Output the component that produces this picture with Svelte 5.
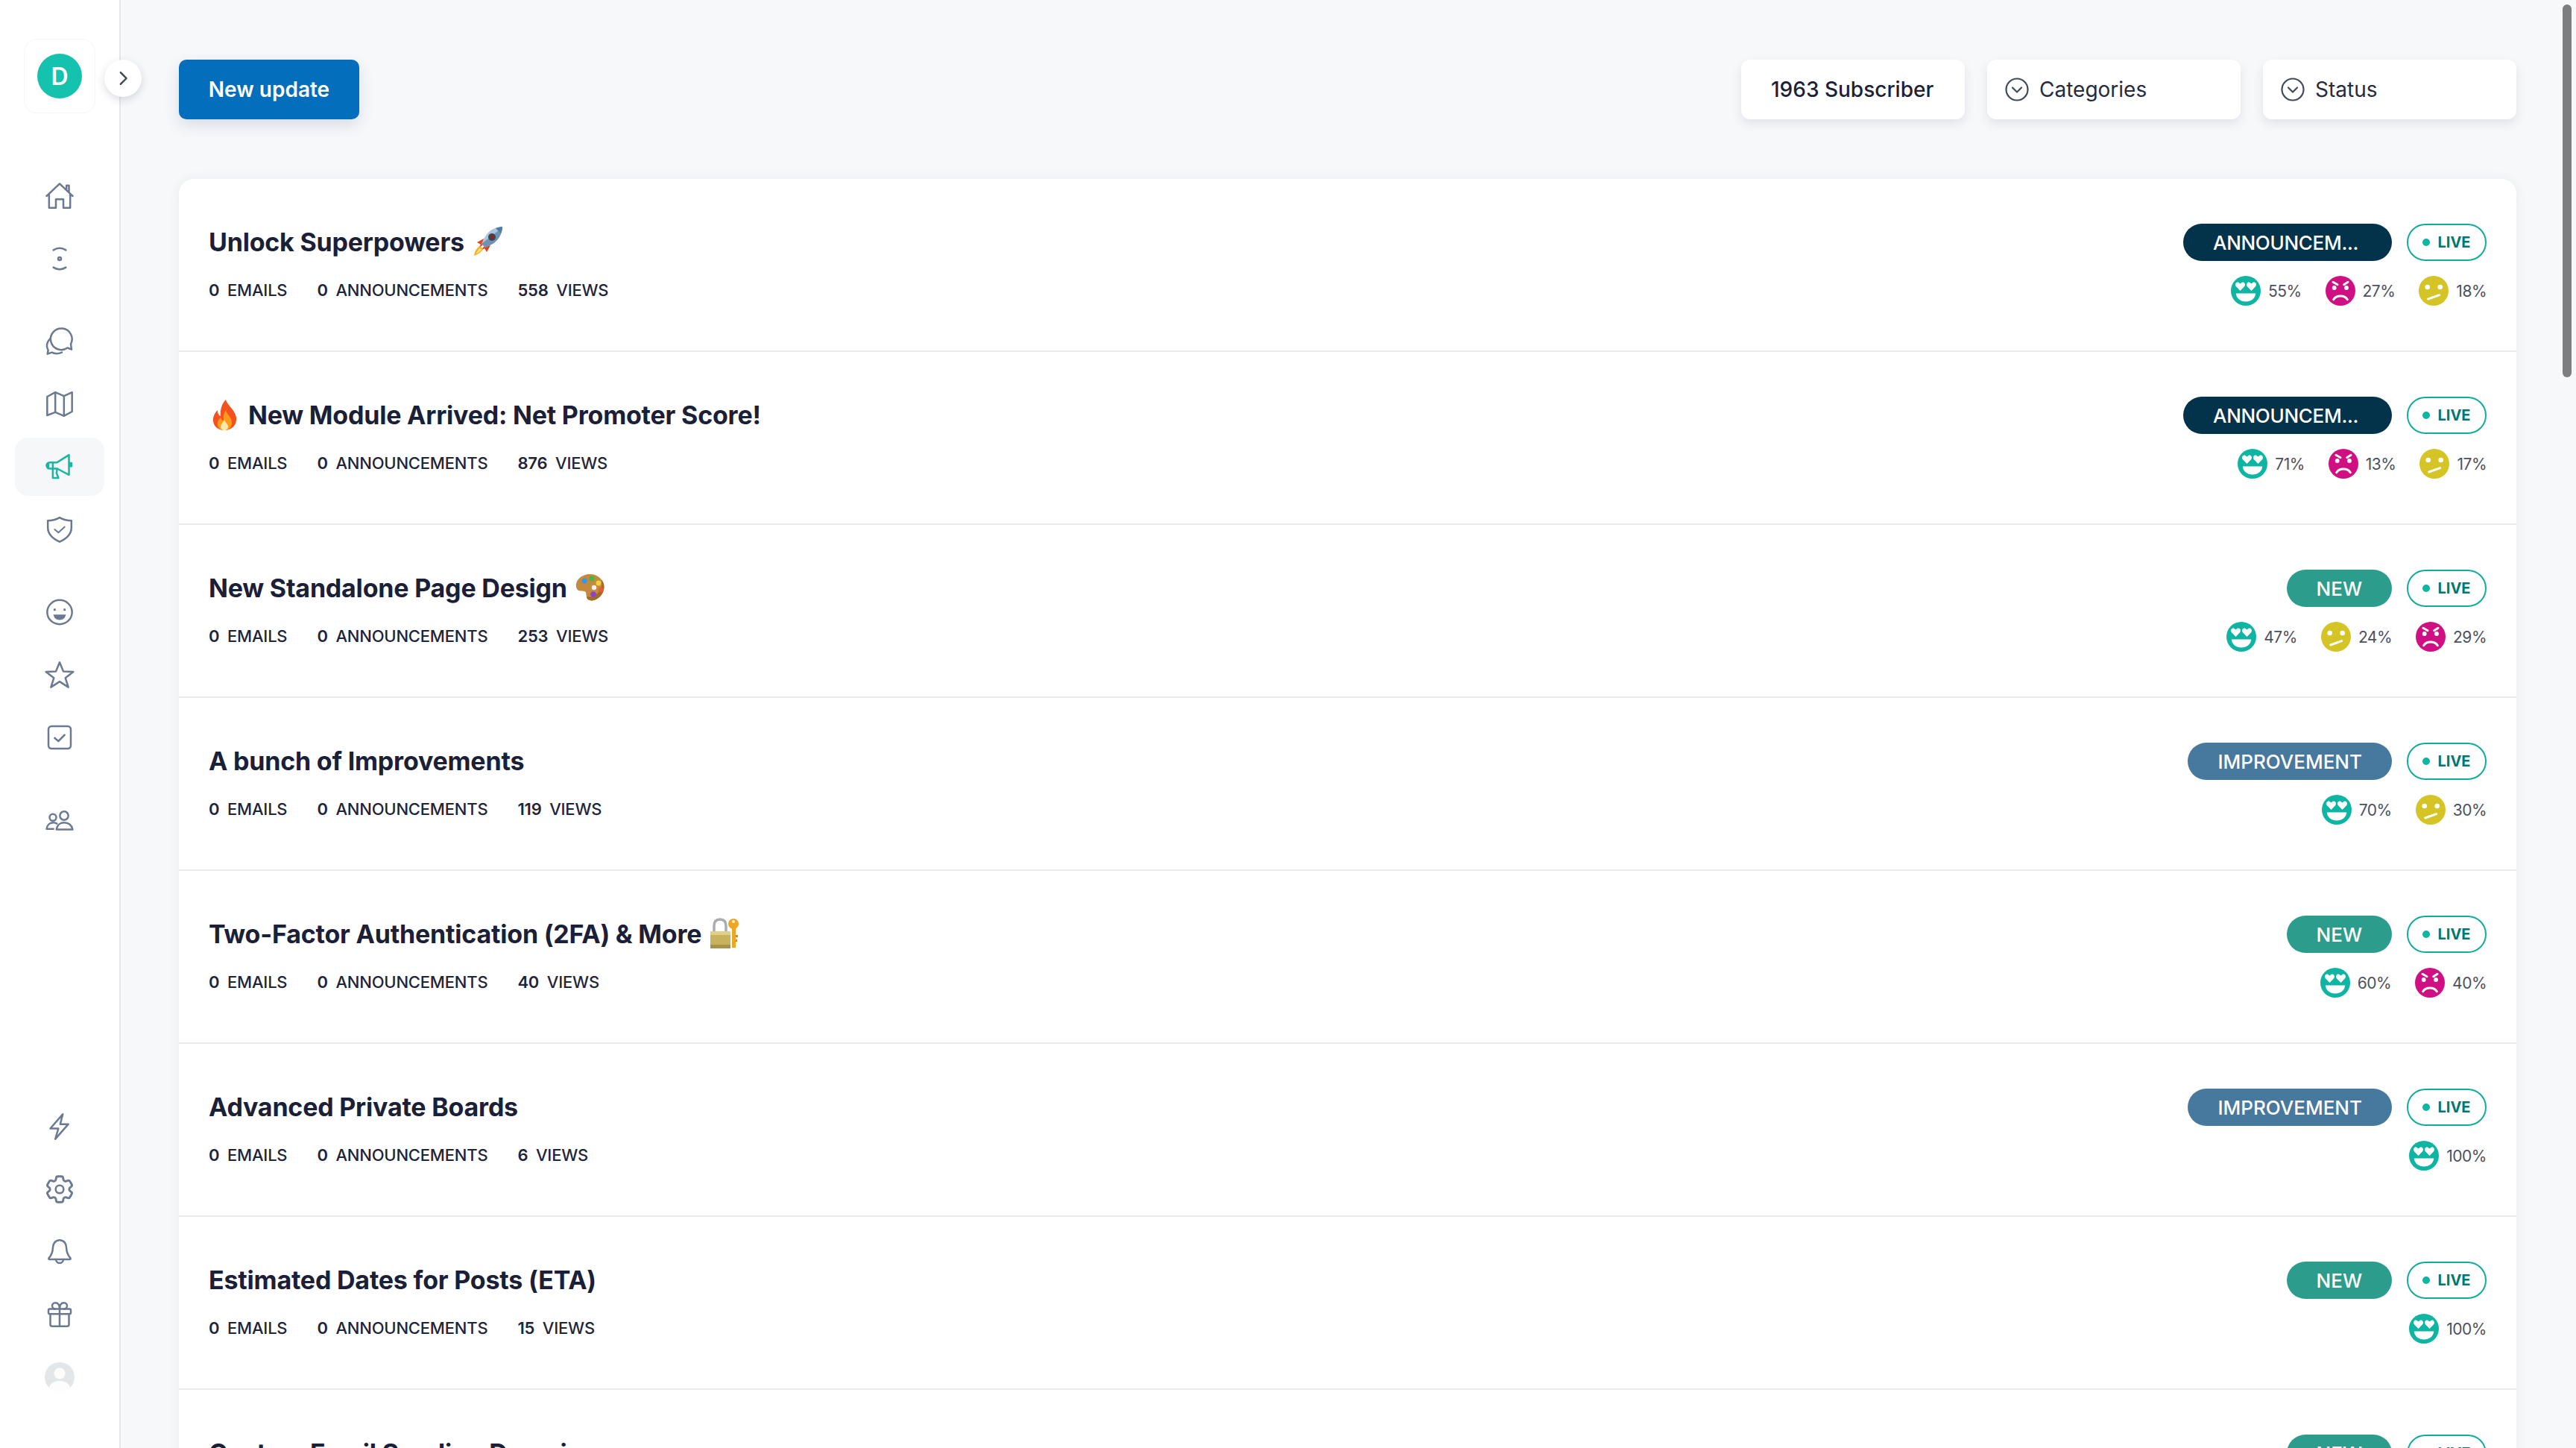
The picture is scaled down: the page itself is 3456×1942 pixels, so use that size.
<script>
	const rows = [
		{ title: 'Unlock Superpowers', emoji: 'rocket', views: 558, tag: 'ANNOUNCEM...', kind: 'announce', faces: [['love', 55], ['angry', 27], ['meh', 18]] },
		{ title: 'New Module Arrived: Net Promoter Score!', lead: 'fire', views: 876, tag: 'ANNOUNCEM...', kind: 'announce', faces: [['love', 71], ['angry', 13], ['meh', 17]] },
		{ title: 'New Standalone Page Design', emoji: 'palette', views: 253, tag: 'NEW', kind: 'new', faces: [['love', 47], ['meh', 24], ['angry', 29]] },
		{ title: 'A bunch of Improvements', views: 119, tag: 'IMPROVEMENT', kind: 'improve', faces: [['love', 70], ['meh', 30]] },
		{ title: 'Two-Factor Authentication (2FA) & More', emoji: 'lock', views: 40, tag: 'NEW', kind: 'new', faces: [['love', 60], ['angry', 40]] },
		{ title: 'Advanced Private Boards', views: 6, tag: 'IMPROVEMENT', kind: 'improve', faces: [['love', 100]] },
		{ title: 'Estimated Dates for Posts (ETA)', views: 15, tag: 'NEW', kind: 'new', faces: [['love', 100]] },
		{ title: 'Custom Email Sending Domain', views: 22, tag: 'NEW', kind: 'new', faces: [['love', 100]] }
	];

	// sidebar groups, icons are drawn in the snippet below
	const topGroups = [['home', 'eye'], ['chat', 'map', 'megaphone', 'shield'], ['smile', 'star', 'check'], ['users']];
	const bottomNav = ['bolt', 'gear', 'bell', 'gift'];
</script>

{#snippet navIcon(name)}
	<svg class="nav-icon" viewBox="0 0 24 24" fill="none" stroke="currentColor" stroke-width="1.5" stroke-linecap="round" stroke-linejoin="round">
		{#if name === 'home'}
			<path d="M1.500 12 12 2 22.500 12M17.500 7.200V3.500h2v5.600M3.500 10.500V21.500H9V14.500H15V21.500H20.500V10.500" />
		{:else if name === 'eye'}
			<path d="M7 5Q12 1.800 17 5M7 19Q12 22.200 17 19" />
			<circle cx="12" cy="12" r="1.200" />
		{:else if name === 'chat'}
			<path d="M21.600 18.400 18.300 17.100A8.600 8.600 0 1 1 21 14Z" />
			<path d="M4.600 9.500C2.500 11.500 1.600 14 1.800 16 1.900 17.300 2.300 18 2.800 19L2.200 22 5.800 20.800C7.500 21.800 10.500 22.200 13.800 20.800" />
		{:else if name === 'map'}
			<path d="M2 6 8.500 2.500 15.500 5.500 22 2.500V18L15.500 21.500 8.500 18.500 2 21Z" />
			<path d="M8.500 2.500V18.500M15.500 5.500V21.500" />
		{:else if name === 'megaphone'}
			<path d="M4 8.500H10L19.500 2.500V18.500L10 13.500H4A2.500 2.500 0 0 1 4 8.500Z" />
			<path d="M6.500 8.500V13.500M6.500 13.500V21H11L9.500 17 10 13.500" />
			<path d="M20 9H21.500V11.500H20Z" fill="currentColor" />
			<path d="M3 9.200A2 2 0 0 0 3 12.800Z" fill="currentColor" />
		{:else if name === 'shield'}
			<path d="M12 2.500C15 4.200 18 5 21.500 5V10.500C21.500 15.500 17.500 19.500 12 22 6.500 19.500 2.500 15.500 2.500 10.500V5C6 5 9 4.200 12 2.500Z" />
			<path d="M8 12 11 14.500 16 10" stroke-width="1.200" />
		{:else if name === 'smile'}
			<ellipse cx="12" cy="12" rx="10" ry="9.700" />
			<circle cx="8" cy="10" r="1" fill="currentColor" stroke="none" />
			<circle cx="16" cy="10" r="1" fill="currentColor" stroke="none" />
			<path d="M7 14H17C16.500 17 14.500 18.300 12 18.300S7.500 17 7 14Z" fill="currentColor" stroke="none" />
		{:else if name === 'star'}
			<path d="M12 2 15 9.300 23 9.600 16.600 14.500 19 22 12 17.500 5 22 7.400 14.500 1 9.600 9 9.300Z" />
		{:else if name === 'check'}
			<rect x="3" y="3" width="18" height="18" rx="2.500" />
			<path d="M8 12.500 11 15 16 10" />
		{:else if name === 'users'}
			<circle cx="15.600" cy="8.400" r="3.400" />
			<circle cx="6.600" cy="9.800" r="2.700" />
			<path d="M9.500 19.500C10 15.500 13 14 15.500 14 18.500 14 21.500 15.500 22.500 19.500Z" />
			<path d="M7 19H1.500C2 15.500 4.500 14 7 14 8 14 9 14.300 9.800 14.800" />
		{:else if name === 'bolt'}
			<path d="M14.500 2 4.500 13.500H11L8.500 22 19 10H12.500Z" />
		{:else if name === 'gear'}
			<path d="M9.594 3.940c.09-.542.56-.94 1.110-.94h2.593c.55 0 1.020.398 1.110.94l.213 1.281c.063.374.313.686.645.87.074.04.147.083.22.127.324.196.72.257 1.075.124l1.217-.456a1.125 1.125 0 011.370.49l1.296 2.247a1.125 1.125 0 01-.26 1.431l-1.003.827c-.293.24-.438.613-.431.992a6.759 6.759 0 010 .255c-.007.378.138.75.43.99l1.005.828c.424.35.534.954.26 1.430l-1.298 2.247a1.125 1.125 0 01-1.369.491l-1.217-.456c-.355-.133-.75-.072-1.076.124a6.570 6.570 0 01-.22.128c-.331.183-.581.495-.644.869l-.213 1.280c-.09.543-.56.941-1.110.941h-2.594c-.55 0-1.020-.398-1.110-.94l-.213-1.281c-.062-.374-.312-.686-.644-.87a6.520 6.520 0 01-.22-.127c-.325-.196-.72-.257-1.076-.124l-1.217.456a1.125 1.125 0 01-1.369-.49l-1.297-2.247a1.125 1.125 0 01.26-1.431l1.004-.827c.292-.24.437-.613.43-.992a6.932 6.932 0 010-.255c.007-.378-.138-.75-.43-.99l-1.004-.828a1.125 1.125 0 01-.26-1.430l1.297-2.247a1.125 1.125 0 011.370-.491l1.216.456c.356.133.751.072 1.076-.124.072-.044.146-.087.22-.128.332-.183.582-.495.644-.869l.214-1.281z" transform="translate(-1.800 -1.800) scale(1.150)" />
			<circle cx="12" cy="12" r="3.200" />
		{:else if name === 'bell'}
			<path d="M12 2.500C8.500 2.500 6.500 5.500 6.500 9 6.500 13 5 15 3.300 17 3 17.500 3.300 18 4 18H20C20.700 18 21 17.500 20.700 17 19 15 17.500 13 17.500 9 17.500 5.500 15.500 2.500 12 2.500Z" />
			<path d="M9 18A3 3 0 0 0 15 18" />
		{:else if name === 'gift'}
			<rect x="3" y="7.500" width="18" height="4" rx="1" />
			<path d="M4.500 11.500V20A1.500 1.500 0 0 0 6 21.500H18A1.500 1.500 0 0 0 19.500 20V11.500M12 7.500V21.500" />
			<path d="M12 7.500C12 4 10.500 2.500 8.500 2.500A2.500 2.500 0 0 0 8.500 7.500M12 7.500C12 4 13.500 2.500 15.500 2.500A2.500 2.500 0 0 1 15.500 7.500" />
		{/if}
	</svg>
{/snippet}

{#snippet face(kind)}
	<svg class="face" viewBox="0 0 40 40">
		{#if kind === 'love'}
			<circle cx="20" cy="20" r="20" fill="#0fb5a3" />
			<path d="M12.500 20 6.700 14C4.500 10.500 8 7.500 10.500 9L12.500 10.500 14.500 9C17 7.500 20.500 10.500 18.300 14Z M27.500 20 21.700 14C19.500 10.500 23 7.500 25.500 9L27.500 10.500 29.500 9C32 7.500 35.500 10.500 33.300 14Z" fill="#fff" />
			<path d="M6.800 23.500H33.200C33 30 27 34.500 20 34.500S7 30 6.800 23.500Z" fill="#fff" />
		{:else if kind === 'angry'}
			<circle cx="20" cy="20" r="20" fill="#cf0f82" />
			<circle cx="11.700" cy="16" r="2.900" fill="#fff" />
			<circle cx="28" cy="16" r="2.900" fill="#fff" />
			<path d="M10 8.300 16 11.700M30 8.300 24.700 11.700M10.700 31.700C14.500 25.500 25.500 25.500 29.300 31.700" fill="none" stroke="#fff" stroke-width="3" stroke-linecap="round" />
		{:else}
			<circle cx="20" cy="20" r="20" fill="#d4c426" />
			<circle cx="11.700" cy="15" r="3.300" fill="#fff" />
			<circle cx="28.700" cy="15" r="3.300" fill="#fff" />
			<path d="M12.700 31 27.700 25.700" fill="none" stroke="#fff" stroke-width="3" stroke-linecap="round" />
		{/if}
	</svg>
{/snippet}

{#snippet emojiPic(kind)}
	<svg class="emoji" viewBox="0 0 44 44">
		{#if kind === 'rocket'}
			<path d="M8 23 17 18 15 27 9 32 13 26Z" fill="#e8461f" />
			<path d="M21 36 26 27 17 29 12 35 18 31Z" fill="#e33b1c" />
			<path d="M4 41C5 34 8 30 12 28L16 32C14 36 10 39 4 41Z" fill="#f9b21c" />
			<path d="M7 38C8 35 10 32 12 31L14 33C12 35 10 37 7 38Z" fill="#fde68a" />
			<path d="M42 2C33 2 24 7 19 15L14 25 19 30 29 25C37 20 42 11 42 2Z" fill="#a9c6de" />
			<path d="M42 2 37 7 14 25 19 30 29 25C37 20 42 11 42 2Z" fill="#6f93b3" />
			<path d="M42 2C39 2 36 3 33 4L40 11C41 8 42 5 42 2Z" fill="#4b7ba6" />
			<circle cx="28" cy="16" r="5" fill="#33495c" />
			<circle cx="28" cy="16" r="3" fill="#7c2d21" />
		{:else if kind === 'fire'}
			<path d="M23 2C25 10 35 15 37 26 38 36 31 43 21 43 11 43 5 36 6 27 7 22 9 19 12 16 12 20 13 23 16 24 15 15 18 7 23 2Z" fill="#f4511e" />
			<path d="M23 16C24 22 31 25 31 33 31 39 27 43 21 43 15 43 11 39 12 33 12 30 14 28 16 26 17 28 18 30 20 30 19 25 20 20 23 16Z" fill="#fb9a1f" />
			<path d="M21 29C22 33 26 34 26 38 26 41 24 43 21 43 18 43 16 41 16 38 16 35 19 33 21 29Z" fill="#fde9a6" />
		{:else if kind === 'palette'}
			<path d="M22 4C10 4 2 12 3 21 4 28 10 26 14 27 18 28 15 34 19 38 23 41 31 39 36 33 41 27 42 19 38 13 35 8 29 4 22 4Z" fill="#c68a3e" />
			<path d="M36 33C31 39 23 41 19 38 18 37 17 36 17 34 22 36 30 33 34 27 37 23 38 18 37 12 38 12 38 13 38 13 42 19 41 27 36 33Z" fill="#a16a28" />
			<circle cx="14" cy="13" r="3.600" fill="#2f9be8" />
			<circle cx="24" cy="10" r="3.600" fill="#49b547" />
			<circle cx="33" cy="16" r="3.400" fill="#f7d038" />
			<circle cx="36" cy="25" r="3.200" fill="#ea5a34" />
			<circle cx="26" cy="31" r="3.800" fill="#8d44c6" />
			<circle cx="27" cy="22" r="3.200" fill="#f7f3e8" />
		{:else}
			<path d="M8 20V12C8 6 11 3 16 3S24 6 24 12V20" fill="none" stroke="#a9adb0" stroke-width="3.500" />
			<rect x="3" y="19" width="27" height="23" rx="2" fill="#c9b25e" />
			<rect x="3" y="19" width="27" height="5" fill="#e0cf85" />
			<rect x="3" y="37" width="27" height="5" fill="#a8914a" />
			<circle cx="34" cy="9" r="7" fill="#eda725" />
			<rect x="32" y="13" width="5" height="28" fill="#eda725" />
			<path d="M37 24H40V27H37ZM37 30H39V33H37Z" fill="#d18c14" />
			<circle cx="34" cy="6" r="2" fill="#fff1c9" />
		{/if}
	</svg>
{/snippet}

<div class="page">
	<aside class="sidebar">
		<div class="top-part">
			<div class="logo-box"><div class="logo-circle">D</div></div>
			<button class="toggle" aria-label="Expand">
				<svg viewBox="0 0 24 24" fill="none" stroke="#3d4555" stroke-width="2.600" stroke-linecap="round" stroke-linejoin="round"><path d="M8.500 3.500 17 12 8.500 20.500" /></svg>
			</button>
			<nav class="nav">
				{#each topGroups as group}
					<div class="nav-group">
						{#each group as name}
							<div class="nav-item" class:active={name === 'megaphone'}>{@render navIcon(name)}</div>
						{/each}
					</div>
				{/each}
			</nav>
		</div>
		<div class="nav-group">
			{#each bottomNav as name}
				<div class="nav-item">{@render navIcon(name)}</div>
			{/each}
			<div class="nav-item">
				<svg class="avatar" viewBox="0 0 40 40">
					<defs><clipPath id="avatar-clip"><circle cx="20" cy="20" r="20" /></clipPath></defs>
					<circle cx="20" cy="20" r="20" fill="#e4e7e9" />
					<g clip-path="url(#avatar-clip)" fill="#fdfdfd">
						<circle cx="20" cy="15" r="7.500" />
						<ellipse cx="20" cy="35" rx="14" ry="10" />
					</g>
				</svg>
			</div>
		</div>
	</aside>

	<main class="main">
		<header class="toolbar">
			<button class="new-btn">New update</button>
			<div class="filters">
				<div class="filter subs">1963 Subscriber</div>
				<div class="filter pick">
					<svg class="chev" viewBox="0 0 32 32" fill="none" stroke="#3f4a5c" stroke-width="2.200" stroke-linecap="round" stroke-linejoin="round"><circle cx="16" cy="16" r="14.500" /><path d="M10 13.500 16 19.500 22 13.500" /></svg>
					Categories
				</div>
				<div class="filter pick">
					<svg class="chev" viewBox="0 0 32 32" fill="none" stroke="#3f4a5c" stroke-width="2.200" stroke-linecap="round" stroke-linejoin="round"><circle cx="16" cy="16" r="14.500" /><path d="M10 13.500 16 19.500 22 13.500" /></svg>
					Status
				</div>
			</div>
		</header>

		<section class="list">
			{#each rows as row}
				<article class="row">
					<div class="row-left">
						<h2 class="title">
							{#if row.lead}{@render emojiPic(row.lead)}{/if}
							<span>{row.title}</span>
							{#if row.emoji}{@render emojiPic(row.emoji)}{/if}
						</h2>
						<div class="stats">
							<span><b>0</b> EMAILS</span>
							<span><b>0</b> ANNOUNCEMENTS</span>
							<span><b>{row.views}</b> VIEWS</span>
						</div>
					</div>
					<div class="row-right">
						<div class="pills">
							<span class="tag {row.kind}">{row.tag}</span>
							<span class="live"><i></i>LIVE</span>
						</div>
						<div class="faces">
							{#each row.faces as [kind, pct]}
								<span class="reaction">{@render face(kind)}{pct}%</span>
							{/each}
						</div>
					</div>
				</article>
			{/each}
		</section>
	</main>
	<div class="scroll-thumb"></div>
</div>

<style>
	:global(body) {
		margin: 0;
		background: #f7f8fa;
	}
	.page {
		display: flex;
		height: 1942px;
		overflow: hidden;
		position: relative;
		font-family: Inter, "Liberation Sans", sans-serif;
		color: #1b2136;
		background: #f7f8fa;
	}
	.sidebar {
		background: #fff;
		border-right: 2px solid #e3e6eb;
		display: flex;
		flex-direction: column;
		justify-content: space-between;
		align-items: center;
		padding-bottom: 56px;
		box-sizing: border-box;
		width: 162px;
		flex-shrink: 0;
		position: relative;
	}
	.top-part {
		width: 100%;
		display: flex;
		flex-direction: column;
		align-items: center;
		padding-top: 52px;
	}
	.logo-box {
		width: 96px;
		height: 100px;
		box-sizing: border-box;
		border: 1px solid #f5f6f8;
		border-radius: 18px;
		display: flex;
		align-items: center;
		justify-content: center;
	}
	.logo-circle {
		width: 60px;
		height: 60px;
		border-radius: 50%;
		background: #15c2ae;
		color: #fff;
		font-size: 32px;
		font-weight: 600;
		display: flex;
		align-items: center;
		justify-content: center;
	}
	.toggle {
		position: absolute;
		left: 140px;
		top: 80px;
		width: 50px;
		height: 50px;
		padding: 14px;
		border: none;
		border-radius: 50%;
		background: #fff;
		box-shadow: 0 4px 12px rgba(30, 40, 60, 0.16);
		z-index: 3;
	}
	.toggle svg {
		display: block;
		width: 22px;
		height: 22px;
	}
	.nav {
		margin-top: 72px;
		display: flex;
		flex-direction: column;
		gap: 33px;
		width: 100%;
	}
	.nav-group {
		display: flex;
		flex-direction: column;
		gap: 6px;
		align-items: center;
		width: 100%;
	}
	.nav-item {
		width: 120px;
		height: 78px;
		border-radius: 18px;
		display: flex;
		align-items: center;
		justify-content: center;
		color: #6b7a90;
	}
	.nav-item.active {
		background: #f6f7f9;
		color: #15b8a2;
	}
	.nav-icon {
		width: 40px;
		height: 40px;
	}
	.avatar {
		width: 40px;
		height: 40px;
	}
	.main {
		flex: 1;
		min-width: 0;
		padding: 80px 80px 0 78px;
		box-sizing: border-box;
	}
	.toolbar {
		display: flex;
		justify-content: space-between;
		align-items: center;
		height: 80px;
		margin-bottom: 80px;
	}
	.new-btn {
		width: 242px;
		height: 80px;
		border: none;
		border-radius: 10px;
		background: #036ebc;
		color: #fff;
		font-family: inherit;
		font-size: 28px;
		font-weight: 600;
		box-shadow: 0 8px 20px rgba(30, 60, 100, 0.14);
	}
	.filters {
		display: flex;
		gap: 30px;
	}
	.filter {
		height: 80px;
		box-sizing: border-box;
		background: #fff;
		border-radius: 12px;
		display: flex;
		align-items: center;
		font-size: 28px;
		font-weight: 500;
		box-shadow: 0 6px 14px rgba(30, 40, 60, 0.1);
	}
	.subs {
		width: 300px;
		padding-left: 40px;
	}
	.pick {
		width: 340px;
		padding-left: 24px;
		gap: 14px;
		color: #252b3d;
		font-weight: 400;
	}
	.chev {
		width: 32px;
		height: 32px;
	}
	.list {
		background: #fff;
		border-radius: 20px 20px 0 0;
		box-shadow: 0 0 16px rgba(30, 40, 60, 0.06);
	}
	.row {
		height: 232px;
		box-sizing: border-box;
		padding: 60px 40px 0;
		border-bottom: 2px solid #e8eaed;
		display: flex;
		justify-content: space-between;
	}
	.title {
		margin: -1px 0 1px;
		height: 50px;
		display: flex;
		align-items: center;
		gap: 9px;
		font-size: 34px;
		font-weight: 650;
		letter-spacing: -0.2px;
		color: #1a2038;
	}
	.emoji {
		width: 44px;
		height: 44px;
	}
	.stats {
		display: flex;
		gap: 40px;
		margin-top: 20px;
		height: 40px;
		align-items: center;
		font-size: 22px;
		font-weight: 500;
		letter-spacing: -0.2px;
		color: #1f2539;
	}
	.stats b {
		font-weight: 600;
		margin-right: 5px;
	}
	.row-right {
		display: flex;
		flex-direction: column;
		align-items: flex-end;
		gap: 20px;
	}
	.pills {
		display: flex;
		gap: 20px;
		align-items: center;
	}
	.tag {
		height: 50px;
		padding: 0 40px;
		border-radius: 25px;
		display: flex;
		align-items: center;
		color: #fff;
		font-size: 26px;
		font-weight: 500;
		white-space: nowrap;
		box-sizing: border-box;
	}
	.announce {
		background: #03334b;
		width: 280px;
		letter-spacing: -0.3px;
	}
	.new {
		background: #2c9d8c;
	}
	.improve {
		background: #47799e;
	}
	.live {
		height: 50px;
		width: 107px;
		box-sizing: border-box;
		border: 2px solid #12ab9c;
		border-radius: 25px;
		display: flex;
		align-items: center;
		justify-content: center;
		gap: 10px;
		color: #05786b;
		font-size: 20px;
		font-weight: 700;
	}
	.live i {
		width: 10px;
		height: 10px;
		border-radius: 50%;
		background: #12b5a0;
	}
	.faces {
		display: flex;
		gap: 32px;
	}
	.reaction {
		display: flex;
		align-items: center;
		gap: 10px;
		font-size: 21px;
		letter-spacing: -0.5px;
		color: #4a5163;
	}
	.face {
		width: 40px;
		height: 40px;
	}
	.scroll-thumb {
		position: absolute;
		right: 6px;
		top: 6px;
		width: 12px;
		height: 500px;
		background: #7d7e80;
		border-radius: 6px;
	}
</style>
